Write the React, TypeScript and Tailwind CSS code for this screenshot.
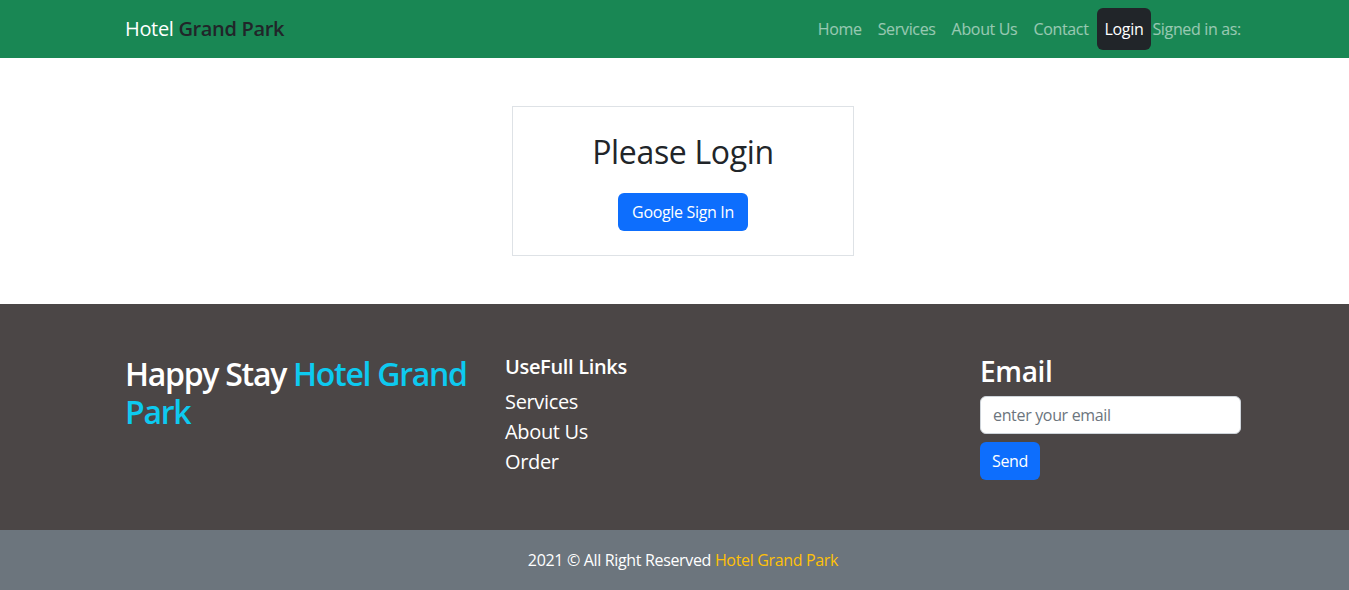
export default function App() {
    const font = { fontFamily: '"Open Sans", "Noto Sans", sans-serif' }

    return (
        <div style={font} className="min-h-screen bg-white tracking-[-0.021em] text-[#212529]">
            {/* navbar */}
            <nav className="bg-[#198754] pl-[17px]">
                <div className="mx-auto flex h-[58px] w-[1116px] items-center justify-between">
                    <a className="text-[20px] leading-[30px] text-white">
                        Hotel <span className="font-semibold text-[#212529]">Grand Park</span>
                    </a>
                    <div className="flex items-center text-[16px] leading-6">
                        <a className="px-2 py-2 text-white/55">Home</a>
                        <a className="px-2 py-2 text-white/55">Services</a>
                        <a className="px-2 py-2 text-white/55">About Us</a>
                        <a className="px-2 py-2 text-white/55">Contact</a>
                        <a className="rounded-md bg-[#212529] px-2 py-[9px] text-white">Login</a>
                        <span className="pl-px text-white/55">Signed in as:</span>
                    </div>
                </div>
            </nav>

            {/* login */}
            <main className="pl-[17px] py-12">
                <div className="mx-auto w-[342px] border border-[#dee2e6] px-6 pt-[26px] pb-6 text-center">
                    <h2 className="text-[32px] leading-[38px] font-medium">Please Login</h2>
                    <button className="mt-[22px] h-[38px] rounded-md bg-[#0d6efd] px-[14px] text-[16px] text-white">
                        Google Sign In
                    </button>
                </div>
            </main>

            {/* footer */}
            <footer className="bg-[#4b4646] pl-[17px] pt-[51px] pb-[50px] text-white">
                <div className="mx-auto grid w-[1116px] grid-cols-12 gap-x-6">
                    <div className="col-span-4">
                        <h2 className="text-[32px] leading-[38px] font-semibold tracking-[-0.04em]">
                            Happy Stay <span className="text-[#0dcaf0]">Hotel Grand Park</span>
                        </h2>
                    </div>
                    <div className="col-span-5">
                        <h5 className="mb-2 text-[20px] leading-6 font-semibold">UseFull Links</h5>
                        <ul className="text-[20px] leading-[30px]">
                            <li>Services</li>
                            <li>About Us</li>
                            <li>Order</li>
                        </ul>
                    </div>
                    <div className="col-span-3">
                        <h3 className="mb-2 text-[28px] leading-[33px] font-semibold">Email</h3>
                        <input
                            type="email"
                            placeholder="enter your email"
                            className="h-[38px] w-full rounded-md border border-[#ced4da] bg-white px-3 text-[16px] text-[#212529] placeholder:text-[#6c757d] focus:outline-none"
                        />
                        <button className="mt-2 h-[38px] rounded-md bg-[#0d6efd] px-3 text-[16px] text-white">Send</button>
                    </div>
                </div>
            </footer>

            <div className="bg-[#6c757d] pl-[17px] py-[18px] text-center text-[16px] leading-6 text-white">
                2021 © All Right Reserved <span className="text-[#ffc107]">Hotel Grand Park</span>
            </div>
        </div>
    );
};
